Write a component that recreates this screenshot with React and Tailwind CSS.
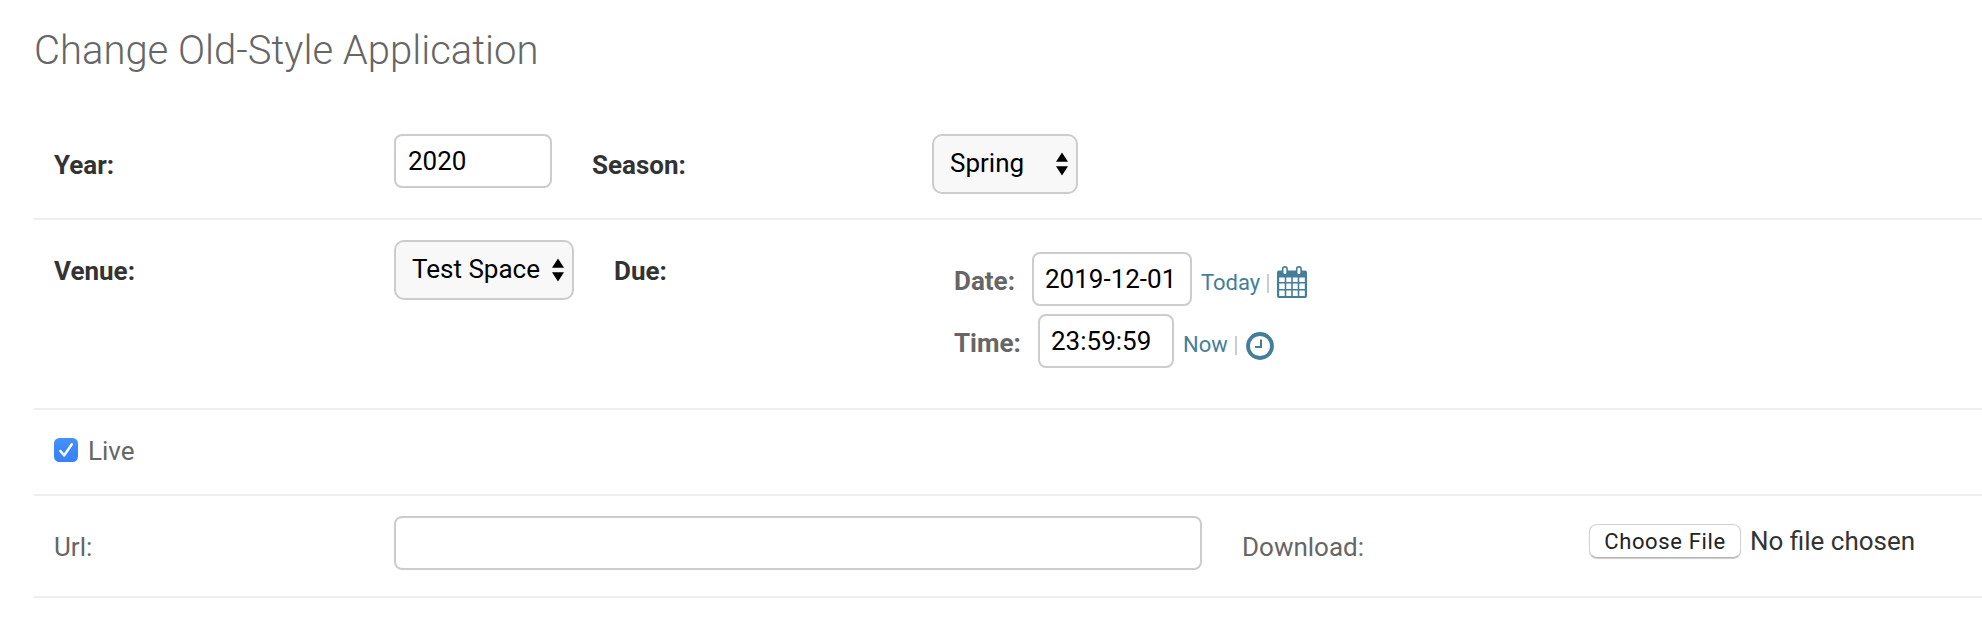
import React from 'react';

const inputClass =
  'block h-[54px] shrink-0 appearance-none rounded-lg border-2 border-[#ccc] bg-white text-[26px] leading-[30px] text-black outline-none';

function Label({ children, bold, className }) {
  return (
    <label className={`mt-4 block w-[340px] shrink-0 leading-[30px] ${bold ? 'font-bold text-[#333]' : 'text-[#666]'} ${className || ''}`}>
      {children}
    </label>
  );
}

function Select({ value, className }) {
  return (
    <div className={`relative h-[60px] shrink-0 ${className}`}>
      <select className="block h-full w-full appearance-none rounded-[10px] border-2 border-[#ccc] bg-[#f8f8f8] pb-0.5 pl-4 text-[26px] leading-[30px] text-black outline-none">
        <option>{value}</option>
      </select>
      <svg className="pointer-events-none absolute right-2.5 top-[18px] h-6 w-3" viewBox="0 0 12 24">
        <path d="M6 0.5 L12 9.7 H0 Z M0 14.3 H12 L6 23.5 Z" fill="#000" />
      </svg>
    </div>
  );
}

function CalendarIcon() {
  return (
    <svg className="ml-2 mt-3.5 h-8 w-[30px] shrink-0" viewBox="0 0 30 32">
      <path
        fill="#447e9b"
        fillRule="evenodd"
        d="M2 4.5H28Q30 4.5 30 6.5V30Q30 32 28 32H2Q0 32 0 30V6.5Q0 4.5 2 4.5Z M2.2 11.5V16H7.7V11.5Z M9.3 11.5V16H14.2V11.5Z M15.8 11.5V16H20.7V11.5Z M22.3 11.5V16H27.8V11.5Z M2.2 17.6V23H7.7V17.6Z M9.3 17.6V23H14.2V17.6Z M15.8 17.6V23H20.7V17.6Z M22.3 17.6V23H27.8V17.6Z M2.2 24.6V30H7.7V24.6Z M9.3 24.6V30H14.2V24.6Z M15.8 24.6V30H20.7V24.6Z M22.3 24.6V30H27.8V24.6Z"
      />
      <rect x="5.7" y="0.9" width="4.4" height="8" rx="2.2" fill="#fff" stroke="#447e9b" strokeWidth="1.6" />
      <rect x="19.7" y="0.9" width="4.4" height="8" rx="2.2" fill="#fff" stroke="#447e9b" strokeWidth="1.6" />
    </svg>
  );
}

function ClockIcon() {
  return (
    <svg className="ml-[9px] mt-[18px] h-7 w-7 shrink-0" viewBox="0 0 28 28" fill="none" stroke="#447e9b">
      <circle cx="14" cy="14" r="12" strokeWidth="3.8" />
      <path d="M15 7.5V15H9" strokeWidth="2" />
    </svg>
  );
}

function Shortcut({ children, className }) {
  return (
    <>
      <a className={`ml-[9px] mt-4 shrink-0 text-[22px] leading-[30px] text-[#447e9b] ${className}`}>{children}</a>
      <span className="mt-[22px] h-[19px] w-0.5 shrink-0 bg-[#ccc]" />
    </>
  );
}

export default function App() {
  return (
    <div className="h-[626px] w-full overflow-hidden bg-white pl-[34px] text-[26px] text-[#333] [font-family:Roboto,sans-serif]">
      <h1 className="flex h-[114px] items-start pt-[27px] text-[40px] font-light leading-[48px] text-[#666]">
        Change Old-Style Application
      </h1>

      <div className="flex h-[106px] items-start border-b-2 border-[#eee] pl-5 pt-5">
        <Label bold>Year:</Label>
        <input className={`${inputClass} w-[158px] px-3`} defaultValue="2020" />
        <Label bold className="ml-10">Season:</Label>
        <Select value="Spring" className="w-[146px]" />
      </div>

      <div className="flex h-[190px] items-start border-b-2 border-[#eee] pl-5 pt-5">
        <Label bold>Venue:</Label>
        <Select value="Test Space" className="w-[180px]" />
        <Label bold className="ml-10">Due:</Label>
        <div className="flex flex-col gap-2 pt-3 font-normal">
          <div className="flex h-[54px] items-start">
            <span className="mt-3.5 w-[78px] shrink-0 font-bold leading-[30px] text-[#666]">Date:</span>
            <input className={`${inputClass} w-[160px] px-[11px]`} defaultValue="2019-12-01" />
            <Shortcut className="w-[66px]">Today</Shortcut>
            <CalendarIcon />
          </div>
          <div className="flex h-[54px] items-start">
            <span className="mt-3.5 w-[84px] shrink-0 font-bold leading-[30px] text-[#666]">Time:</span>
            <input className={`${inputClass} w-[136px] px-[11px]`} defaultValue="23:59:59" />
            <Shortcut className="w-[52px]">Now</Shortcut>
            <ClockIcon />
          </div>
        </div>
      </div>

      <div className="flex h-[86px] items-start border-b-2 border-[#eee] pl-5 pt-[26px]">
        <svg className="mt-0.5 h-6 w-6 shrink-0" viewBox="0 0 24 24">
          <defs>
            <linearGradient id="check-fill" x1="0" y1="0" x2="0" y2="1">
              <stop offset="0" stopColor="#4490fb" />
              <stop offset="1" stopColor="#3581f8" />
            </linearGradient>
          </defs>
          <rect width="24" height="24" rx="5.5" fill="url(#check-fill)" />
          <path d="M6.4 13 L10.2 17.4 L17.8 6.2" fill="none" stroke="#fff" strokeWidth="2.5" strokeLinecap="round" strokeLinejoin="round" />
        </svg>
        <label className="ml-2.5 leading-[30px] text-[#666]">Live</label>
      </div>

      <div className="flex h-[102px] items-start border-b-2 border-[#eee] pl-5 pt-5">
        <Label>Url:</Label>
        <input className={`${inputClass} w-[808px] px-3`} />
        <Label className="ml-10">Download:</Label>
        <div className="ml-[7px] flex items-start pt-2">
          <button className="h-[34px] w-[152px] rounded-lg border border-[#d2d2d2] border-b-[#b4b4b4] bg-white pt-0.5 text-[22px] leading-[30px] tracking-[0.65px] text-[#222] shadow-[0_1px_1px_rgba(0,0,0,0.2)]">
            Choose File
          </button>
          <span className="ml-[9px] mt-0.5 whitespace-nowrap leading-[30px]">No file chosen</span>
        </div>
      </div>
    </div>
  );
}
